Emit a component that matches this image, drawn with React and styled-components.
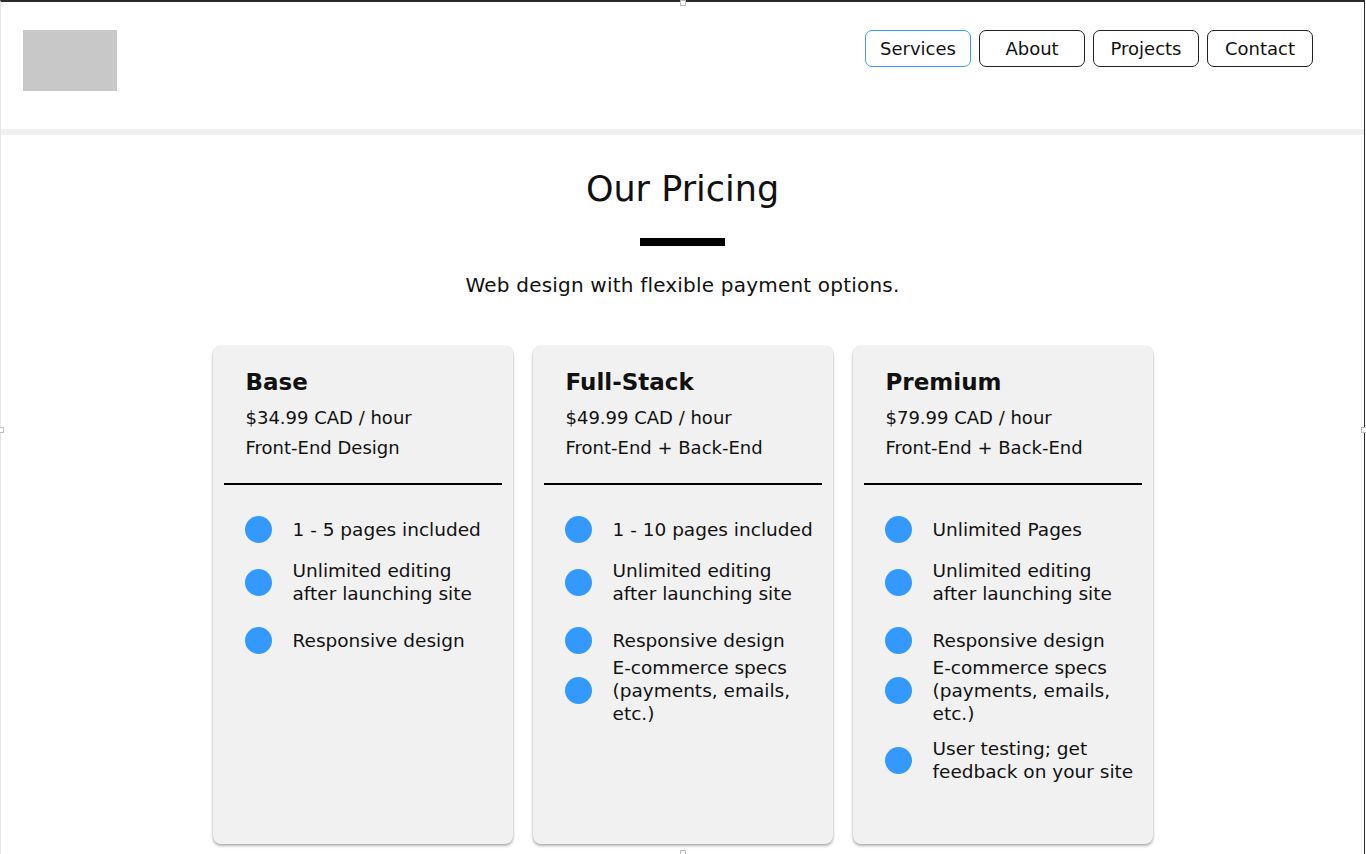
import styled, { createGlobalStyle } from "styled-components";

const GlobalStyle = createGlobalStyle`
    html, body {
        margin: 0;
        padding: 0;
        height: 100%;
        overflow: hidden;
        background: #ffffff;
    }
    body {
        font-family: "DejaVu Sans", "Liberation Sans", sans-serif;
        color: #111111;
    }
`;

const Frame = styled.div`
    position: relative;
    box-sizing: border-box;
    width: 1365px;
    height: 854px;
    border-top: 2px solid #2b2b2b;
    border-right: 1px solid #2b2b2b;
    border-left: 1px solid #e4e4e4;
`;

const Handle = styled.span`
    position: absolute;
    width: 6px;
    height: 6px;
    background: #ffffff;
    border: 1px solid #bdbdbd;
    box-sizing: border-box;
`;

const Header = styled.header`
    height: 133px;
    display: flex;
    align-items: flex-start;
    justify-content: space-between;
    padding: 28px 51px 0 22px;
    box-sizing: border-box;
    border-bottom: 6px solid #f0f0f0;
`;

const Logo = styled.div`
    width: 94px;
    height: 61px;
    background: #c8c8c8;
`;

const Nav = styled.nav`
    display: flex;
    gap: 8px;
`;

const NavButton = styled.button`
    width: 106px;
    height: 37px;
    box-sizing: border-box;
    background: #ffffff;
    border: 1px solid ${(p) => (p.$active ? "#3d9bff" : "#222222")};
    border-radius: 7px;
    font-family: inherit;
    font-size: 18px;
    color: #111111;
    padding: 0;
    cursor: pointer;
`;

const Main = styled.main`
    display: flex;
    flex-direction: column;
    align-items: center;
    padding-top: 34px;
`;

const Title = styled.h1`
    margin: 0;
    font-size: 35px;
    font-weight: 400;
    line-height: 40px;
`;

const TitleBar = styled.div`
    width: 85px;
    height: 8px;
    background: #000000;
    margin-top: 29px;
`;

const Subtitle = styled.p`
    margin: 27px 0 0;
    font-size: 20px;
    letter-spacing: 0.2px;
    line-height: 24px;
`;

const Cards = styled.div`
    display: flex;
    gap: 20px;
    margin-top: 49px;
`;

const Card = styled.section`
    width: 300px;
    height: 498px;
    box-sizing: border-box;
    background: #f1f1f1;
    border-radius: 8px;
    box-shadow: 0 2px 3px rgba(0, 0, 0, 0.3), 0 0 2px rgba(0, 0, 0, 0.12);
    padding: 21px 11px 0;
`;

const CardHead = styled.div`
    padding: 0 22px 20px;
    border-bottom: 2px solid #000000;
`;

const PlanName = styled.h2`
    margin: 0 0 6px;
    font-size: 23px;
    font-weight: 700;
    line-height: 30px;
`;

const PlanLine = styled.div`
    font-size: 18px;
    line-height: 30px;
`;

const Features = styled.ul`
    list-style: none;
    margin: 0;
    padding: 31px 0 0 21px;
    display: flex;
    flex-direction: column;
`;

const Feature = styled.li`
    display: flex;
    align-items: center;
    gap: 21px;
    margin-top: ${(p) => p.$space}px;
`;

const Dot = styled.span`
    flex: none;
    width: 27px;
    height: 27px;
    border-radius: 50%;
    background: #3399ff;
`;

const FeatureText = styled.span`
    font-size: 18.5px;
    line-height: 23px;
`;

const plans = [
    {
        name: "Base",
        price: "$34.99 CAD / hour",
        scope: "Front-End Design",
        features: [
            ["1 - 5 pages included", 0],
            ["Unlimited editing\nafter launching site", 16],
            ["Responsive design", 22],
        ],
    },
    {
        name: "Full-Stack",
        price: "$49.99 CAD / hour",
        scope: "Front-End + Back-End",
        features: [
            ["1 - 10 pages included", 0],
            ["Unlimited editing\nafter launching site", 16],
            ["Responsive design", 22],
            ["E-commerce specs\n(payments, emails,\netc.)", 2],
        ],
    },
    {
        name: "Premium",
        price: "$79.99 CAD / hour",
        scope: "Front-End + Back-End",
        features: [
            ["Unlimited Pages", 0],
            ["Unlimited editing\nafter launching site", 16],
            ["Responsive design", 22],
            ["E-commerce specs\n(payments, emails,\netc.)", 2],
            ["User testing; get\nfeedback on your site", 12],
        ],
    },
];

export default function App() {
    return (
        <>
            <GlobalStyle />
            <Frame>
                <Header>
                    <Logo />
                    <Nav>
                        <NavButton $active>Services</NavButton>
                        <NavButton>About</NavButton>
                        <NavButton>Projects</NavButton>
                        <NavButton>Contact</NavButton>
                    </Nav>
                </Header>
                <Main>
                    <Title>Our Pricing</Title>
                    <TitleBar />
                    <Subtitle>Web design with flexible payment options.</Subtitle>
                    <Cards>
                        {plans.map((plan) => (
                            <Card key={plan.name}>
                                <CardHead>
                                    <PlanName>{plan.name}</PlanName>
                                    <PlanLine>{plan.price}</PlanLine>
                                    <PlanLine>{plan.scope}</PlanLine>
                                </CardHead>
                                <Features>
                                    {plan.features.map(([text, space]) => (
                                        <Feature key={text} $space={space}>
                                            <Dot />
                                            <FeatureText>
                                                {text.split("\n").map((line) => (
                                                    <div key={line}>{line}</div>
                                                ))}
                                            </FeatureText>
                                        </Feature>
                                    ))}
                                </Features>
                            </Card>
                        ))}
                    </Cards>
                </Main>
                <Handle style={{ left: 679, top: -2 }} />
                <Handle style={{ left: -3, top: 425 }} />
                <Handle style={{ left: 1360, top: 425 }} />
                <Handle style={{ left: 679, top: 848 }} />
            </Frame>
        </>
    );
}
